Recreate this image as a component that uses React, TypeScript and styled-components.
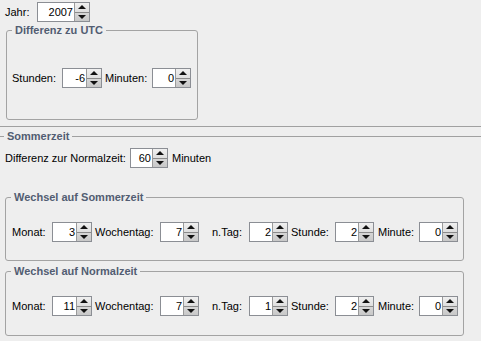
import styled, { createGlobalStyle } from "styled-components";

const Global = createGlobalStyle`
  html, body {
    margin: 0;
    padding: 0;
    background: #eeeeee;
  }
`

const Page = styled.div`
  width: 481px;
  height: 341px;
  background: #eeeeee;
  font-family: "Liberation Sans", Arial, sans-serif;
  font-size: 11px;
  color: #000;
  overflow: hidden;
`
const Row = styled.div<{ $top?: number; $left?: number }>`
  display: flex;
  align-items: center;
  height: 20px;
  margin-top: ${p => p.$top ?? 0}px;
  padding-left: ${p => p.$left ?? 0}px;
`
const Label = styled.span<{ $w: number; $gap?: number }>`
  width: ${p => p.$w}px;
  margin-left: ${p => p.$gap ?? 0}px;
  flex-shrink: 0;
  white-space: nowrap;
`
const After = styled.span`
  margin-left: 4px;
`
const SpinBox = styled.div<{ $w: number }>`
  width: ${p => p.$w}px;
  height: 20px;
  box-sizing: border-box;
  display: flex;
  flex-shrink: 0;
  border: 1px solid #8b8e94;
  background: #fff;
`
const Value = styled.div`
  flex: 1;
  text-align: right;
  line-height: 18px;
  padding-right: 1px;
`
const Buttons = styled.div`
  width: 14px;
  display: flex;
  flex-direction: column;
  border-left: 1px solid #9a9a9a;
`
const Btn = styled.div<{ $down?: boolean }>`
  flex: 1;
  display: flex;
  align-items: center;
  justify-content: center;
  background: ${p => (p.$down ? "linear-gradient(#d6d6d6, #c8c8c8)" : "linear-gradient(#f0f0f0, #dedede)")};
  border-top: ${p => (p.$down ? "1px solid #8a8a8a" : "none")};
`
const Tri = styled.div<{ $down?: boolean }>`
  width: 0;
  height: 0;
  border-left: 4px solid transparent;
  border-right: 4px solid transparent;
  ${p => (p.$down ? "border-top: 4px solid #111;" : "border-bottom: 4px solid #111;")}
`
const Group = styled.div<{ $top: number; $left: number; $w: number; $h: number }>`
  position: relative;
  box-sizing: border-box;
  margin-top: ${p => p.$top}px;
  margin-left: ${p => p.$left}px;
  width: ${p => p.$w}px;
  height: ${p => p.$h}px;
  border: 1px solid #a3a3a3;
  border-radius: 3px;
`
const Title = styled.span`
  position: absolute;
  top: -8px;
  left: 5px;
  padding: 0 3px;
  background: #eeeeee;
  font-weight: bold;
  color: #525d72;
  line-height: 14px;
`
const Separator = styled.div`
  margin-top: 6px;
  height: 1px;
  background: #a0a0a0;
`
const Section = styled.div`
  display: flex;
  align-items: center;
  height: 12px;
  margin-top: 3px;
  &::before {
    content: "";
    width: 4px;
    height: 1px;
    background: #a0a0a0;
  }
  &::after {
    content: "";
    flex: 1;
    height: 1px;
    background: #a0a0a0;
  }
`
const SectionText = styled.span`
  padding: 0 3px;
  font-weight: bold;
  color: #525d72;
`

function Spinner({ value, w }: { value: string; w: number }) {
  return (
    <SpinBox $w={w}>
      <Value>{value}</Value>
      <Buttons>
        <Btn><Tri /></Btn>
        <Btn $down><Tri $down /></Btn>
      </Buttons>
    </SpinBox>
  )
}

function SwitchRow({ month, day }: { month: string; day: string }) {
  return (
    <Row $top={24} $left={6}>
      <Label $w={40}>Monat:</Label>
      <Spinner value={month} w={40} />
      <Label $w={65} $gap={3}>Wochentag:</Label>
      <Spinner value="7" w={39} />
      <Label $w={37} $gap={13}>n.Tag:</Label>
      <Spinner value={day} w={39} />
      <Label $w={44} $gap={3}>Stunde:</Label>
      <Spinner value="2" w={39} />
      <Label $w={41} $gap={4}>Minute:</Label>
      <Spinner value="0" w={39} />
    </Row>
  )
}

export default function App() {
  return (
    <Page>
      <Global />
      <Row $top={2} $left={5}>
        <Label $w={32}>Jahr:</Label>
        <Spinner value="2007" w={53} />
      </Row>
      <Group $top={8} $left={6} $w={192} $h={90}>
        <Title>Differenz zu UTC</Title>
        <Row $top={37} $left={5}>
          <Label $w={50}>Stunden:</Label>
          <Spinner value="-6" w={40} />
          <Label $w={47} $gap={3}>Minuten:</Label>
          <Spinner value="0" w={39} />
        </Row>
      </Group>
      <Separator />
      <Section>
        <SectionText>Sommerzeit</SectionText>
      </Section>
      <Row $top={6} $left={5}>
        <Label $w={125}>Differenz zur Normalzeit:</Label>
        <Spinner value="60" w={38} />
        <After>Minuten</After>
      </Row>
      <Group $top={29} $left={5} $w={459} $h={64}>
        <Title>Wechsel auf Sommerzeit</Title>
        <SwitchRow month="3" day="2" />
      </Group>
      <Group $top={10} $left={5} $w={459} $h={65}>
        <Title>Wechsel auf Normalzeit</Title>
        <SwitchRow month="11" day="1" />
      </Group>
    </Page>
  )
}
